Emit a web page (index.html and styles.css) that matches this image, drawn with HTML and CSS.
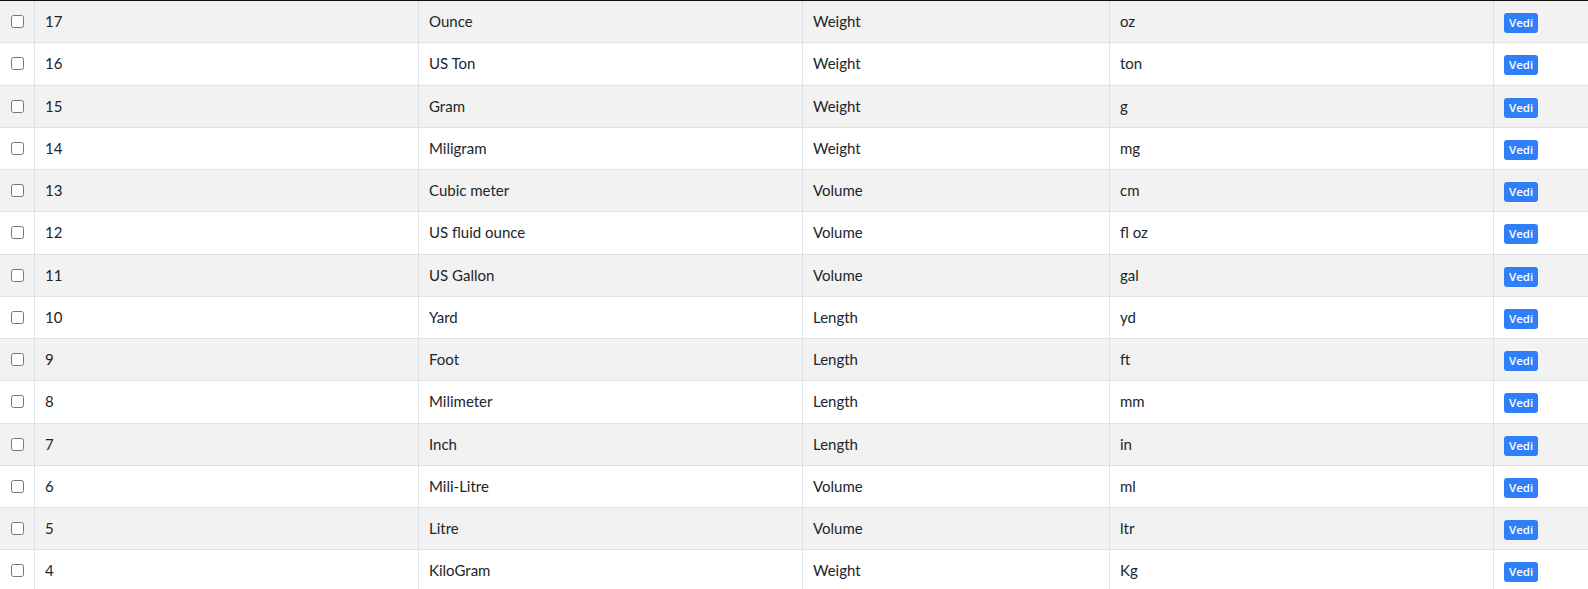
FILE: index.html
```html
<!DOCTYPE html>
<html lang="it">
<head>
    <meta charset="UTF-8">
    <meta name="viewport" content="width=device-width, initial-scale=1.0">
    <title>Unità di misura</title>
    <link rel="stylesheet" href="styles.css">
</head>
<body>
    <table class="units">
        <colgroup>
            <col class="c-check">
            <col class="c-id">
            <col class="c-name">
            <col class="c-type">
            <col class="c-short">
            <col class="c-action">
        </colgroup>
        <tbody>
            <tr><td class="check"><input type="checkbox"></td><td>17</td><td>Ounce</td><td>Weight</td><td>oz</td><td><a href="#" class="btn">Vedi</a></td></tr>
            <tr><td class="check"><input type="checkbox"></td><td>16</td><td>US Ton</td><td>Weight</td><td>ton</td><td><a href="#" class="btn">Vedi</a></td></tr>
            <tr><td class="check"><input type="checkbox"></td><td>15</td><td>Gram</td><td>Weight</td><td>g</td><td><a href="#" class="btn">Vedi</a></td></tr>
            <tr><td class="check"><input type="checkbox"></td><td>14</td><td>Miligram</td><td>Weight</td><td>mg</td><td><a href="#" class="btn">Vedi</a></td></tr>
            <tr><td class="check"><input type="checkbox"></td><td>13</td><td>Cubic meter</td><td>Volume</td><td>cm</td><td><a href="#" class="btn">Vedi</a></td></tr>
            <tr><td class="check"><input type="checkbox"></td><td>12</td><td>US fluid ounce</td><td>Volume</td><td>fl oz</td><td><a href="#" class="btn">Vedi</a></td></tr>
            <tr><td class="check"><input type="checkbox"></td><td>11</td><td>US Gallon</td><td>Volume</td><td>gal</td><td><a href="#" class="btn">Vedi</a></td></tr>
            <tr><td class="check"><input type="checkbox"></td><td>10</td><td>Yard</td><td>Length</td><td>yd</td><td><a href="#" class="btn">Vedi</a></td></tr>
            <tr><td class="check"><input type="checkbox"></td><td>9</td><td>Foot</td><td>Length</td><td>ft</td><td><a href="#" class="btn">Vedi</a></td></tr>
            <tr><td class="check"><input type="checkbox"></td><td>8</td><td>Milimeter</td><td>Length</td><td>mm</td><td><a href="#" class="btn">Vedi</a></td></tr>
            <tr><td class="check"><input type="checkbox"></td><td>7</td><td>Inch</td><td>Length</td><td>in</td><td><a href="#" class="btn">Vedi</a></td></tr>
            <tr><td class="check"><input type="checkbox"></td><td>6</td><td>Mili-Litre</td><td>Volume</td><td>ml</td><td><a href="#" class="btn">Vedi</a></td></tr>
            <tr><td class="check"><input type="checkbox"></td><td>5</td><td>Litre</td><td>Volume</td><td>ltr</td><td><a href="#" class="btn">Vedi</a></td></tr>
            <tr><td class="check"><input type="checkbox"></td><td>4</td><td>KiloGram</td><td>Weight</td><td>Kg</td><td><a href="#" class="btn">Vedi</a></td></tr>
        </tbody>
    </table>
</body>
</html>
```

FILE: styles.css
```css
body {
    font-family: Lato, 'Liberation Sans', sans-serif;
    font-size: 15px;
    color: #212529;
    margin: 0;
    background: white;
    overflow: hidden;
}
.units {
    width: 1588px;
    table-layout: fixed;
    border-collapse: separate;
    border-spacing: 0;
    border-top: 2px solid #111;
    margin-top: -1px;
}
.c-check { width: 34px; }
.c-id { width: 384px; }
.c-name { width: 384px; }
.c-type { width: 307px; }
.c-short { width: 384px; }
.c-action { width: 95px; }
.units td {
    padding: 9px 10px;
    line-height: 23.25px;
    border-bottom: 1px solid #dee2e6;
    border-left: 1px solid #dee2e6;
    vertical-align: middle;
    white-space: nowrap;
}
.units td.check {
    border-left: none;
    padding: 0;
    text-align: center;
}
.units tr:nth-child(odd) td {
    background: #f2f2f2;
}
.check input {
    margin: 0 0 3px 0;
    vertical-align: middle;
}
.btn {
    display: inline-block;
    background: #2f80f8;
    color: white;
    font-family: 'Open Sans', sans-serif;
    font-size: 11.5px;
    font-weight: 600;
    line-height: 20px;
    padding: 0 5px;
    border-radius: 3px;
    text-decoration: none;
    vertical-align: middle;
}
```
